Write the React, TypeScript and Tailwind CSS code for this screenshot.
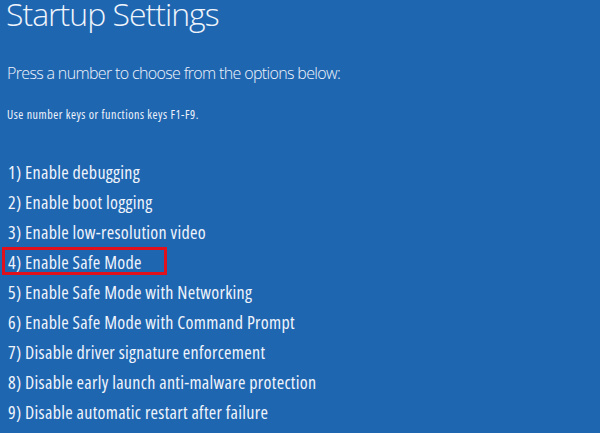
import React from "react";

const items = [
  "1) Enable debugging",
  "2) Enable boot logging",
  "3) Enable low-resolution video",
  "4) Enable Safe Mode",
  "5) Enable Safe Mode with Networking",
  "6) Enable Safe Mode with Command Prompt",
  "7) Disable driver signature enforcement",
  "8) Disable early launch anti-malware protection",
  "9) Disable automatic restart after failure",
];

export default function App() {
  return (
    <div
      className="w-[600px] h-[433px] overflow-hidden bg-[#1f66b1] text-[#eff4fb] flex flex-col"
      style={{ fontFamily: '"Open Sans", "Noto Sans", sans-serif' }}
    >
      <div className="pl-[6px] mt-[-2px] text-[32px] leading-[32px] font-light tracking-[-1px]">
        Startup Settings
      </div>
      <div className="pl-[7px] mt-[33px] text-[16px] leading-[20px] font-light tracking-[-0.65px]">
        Press a number to choose from the options below:
      </div>
      <div className="pl-[7px] mt-[24px] text-[12px] leading-[16px] font-stretch-condensed tracking-[0.55px]">
        Use number keys or functions keys F1-F9.
      </div>
      <div className="flex flex-col mt-[34px]">
        {items.map((t, i) => (
          <div key={i} className="relative h-[30px] pl-[8px] text-[18px] leading-[30px] font-stretch-condensed tracking-[0.3px]">
            {t}
            {i === 3 && (
              <div className="absolute left-[2px] top-0 w-[165px] h-[28px] border-[3px] border-[#e0101c]" />
            )}
          </div>
        ))}
      </div>
    </div>
  );
}
